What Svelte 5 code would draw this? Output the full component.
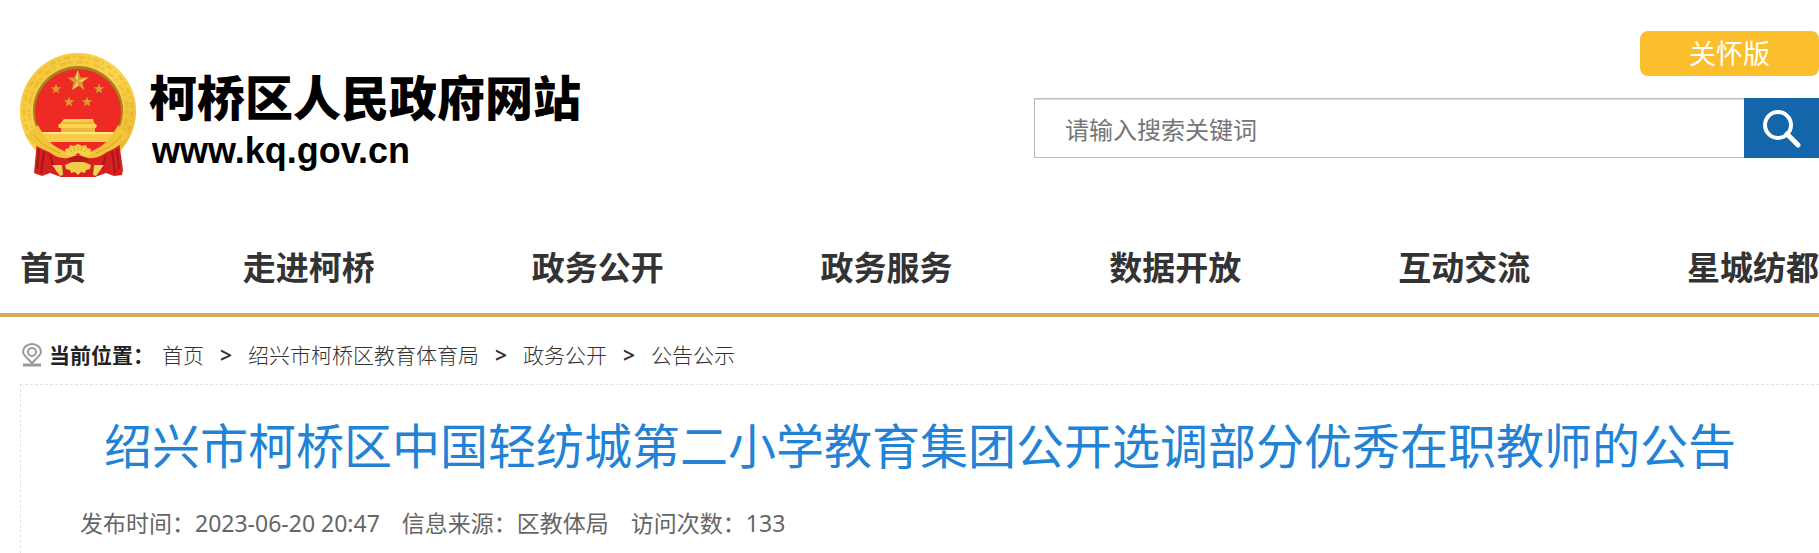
<script>
  const navItems = ['首页', '走进柯桥', '政务公开', '政务服务', '数据开放', '互动交流', '星城纺都'];
  const crumbs = ['首页', '绍兴市柯桥区教育体育局', '政务公开', '公告公示'];
  let keyword = '';
</script>

<div class="page">
  <header>
    <a class="logo" href="#home">
      <svg class="emblem" viewBox="0 0 116 125" aria-hidden="true">
        <defs>
          <linearGradient id="gold" x1="0" y1="0" x2="1" y2="1">
            <stop offset="0" stop-color="#f3c235" />
            <stop offset="0.5" stop-color="#fbd650" />
            <stop offset="1" stop-color="#e9ae26" />
          </linearGradient>
          <polygon id="star" points="0,-11 2.6,-3.6 10.5,-3.4 4.2,1.4 6.5,8.9 0,4.4 -6.5,8.9 -4.2,1.4 -10.5,-3.4 -2.6,-3.6" />
        </defs>
        <circle cx="58" cy="58" r="58" fill="url(#gold)" />
        <circle cx="58" cy="58" r="54" fill="none" stroke="#dc9f22" stroke-width="3" stroke-dasharray="6 3 2 4" opacity="0.3" />
        <circle cx="58" cy="58" r="49" fill="none" stroke="#dc9f22" stroke-width="3" stroke-dasharray="3 5 7 2" opacity="0.3" />
        <circle cx="58" cy="58" r="45" fill="#a9801d" />
        <circle cx="58" cy="59" r="43" fill="#ee2a24" />
        <g fill="#d6a02a">
          <use href="#star" transform="translate(58 28)" />
          <use href="#star" transform="translate(36 36) scale(.5)" />
          <use href="#star" transform="translate(79 36) scale(.5)" />
          <use href="#star" transform="translate(49 49) scale(.5)" />
          <use href="#star" transform="translate(67 49) scale(.5)" />
        </g>
        <path d="M58 17v11l-3-4z M58 28l10-4-6 5z M58 28l-6 9 6-4z" fill="#f4d470" />
        <path d="M44 66h29l1 4 3 2-1 3H39l-1-3 3-2z" fill="#fbd34c" />
        <path d="M43 70h30" stroke="#d79a2a" stroke-width="1" />
        <path d="M41 75h34v5H41z" fill="#f0b93c" />
        <path d="M22 80h72l-4 9H26z" fill="#f8cc4a" />
        <path d="M22 80h72" stroke="#ffe680" stroke-width="2" />
        <path d="M17 88l12 9 16 6h26l16-6 12-9 4 29-1 5-8 1-8-3-11 4H41l-11-4-8 3-8-3z" fill="#d7201f" />
        <path d="M19 96l-2 20M24 98l-3 22M30 102l4 14M97 96l2 20M92 98l3 22M86 102l-4 14" fill="none" stroke="#8f1518" stroke-width="2" opacity="0.7" />
        <path d="M7 82l11-10c6 12 13 20 22 24l8 4 10 3 10-3 8-4c9-4 16-12 22-24l11 10c-7 9-14 14-22 17-7 5-13 7-19 6l-10-3-10 3c-6 1-12-1-19-6-8-3-17-8-24-17z" fill="#f3c33a" />
        <path d="M14 82c8 10 16 14 26 18M102 82c-8 10-16 14-26 18" fill="none" stroke="#dba028" stroke-width="1" />
        <path d="M47 106l11-4 11 4-5 4H52z" fill="#b8191b" />
        <path d="M32 112h10l1 10-3 1z M84 112H74l-1 10 3 1z" fill="#f0cf5a" />
        <path d="M45 112l7-3h12l7 3-1 4-4 1-1 3-4-1-3 3-3-3-4 1-1-3-4-1z" fill="#f5cc48" />
        <path d="M46 102l-1-6 4-1 1-3 4 1 4-2 4 2 4-1 1 3 4 1-1 6-7 1-5-3-5 3z" fill="#f8d14c" />
        <path d="M52 99l-3-3M55 98l-1-4M58 98v-5M61 98l1-4M64 99l3-3" stroke="#dba028" stroke-width="1" />
      </svg>
      <span class="names">
        <strong>柯桥区人民政府网站</strong>
        <b>www.kq.gov.cn</b>
      </span>
    </a>

    <div class="tools">
      <button class="care" type="button">关怀版</button>
      <form class="search" on:submit|preventDefault>
        <input type="text" aria-label="搜索" placeholder="请输入搜索关键词" bind:value={keyword} />
        <button type="submit" aria-label="搜索">
          <svg viewBox="0 0 40 40" aria-hidden="true">
            <circle cx="16" cy="17" r="13" />
            <path d="M25 26l11 11" stroke-width="5" />
          </svg>
        </button>
      </form>
    </div>
  </header>

  <nav>
    {#each navItems as item}
      <a href="#nav">{item}</a>
    {/each}
  </nav>

  <div class="crumbs">
    <svg viewBox="0 0 20 24" aria-hidden="true">
      <path d="M10 20C5 15 1 12 1 9a9 8 0 0 1 18 0c0 3-4 6-9 11z" />
      <circle cx="10" cy="9" r="4" />
      <path d="M1 22h18" stroke-width="3" />
    </svg>
    <strong>当前位置：</strong>
    <div class="trail">
      {#each crumbs as crumb, i}
        {#if i > 0}<span>&gt;</span>{/if}
        <a href="#crumb">{crumb}</a>
      {/each}
    </div>
  </div>

  <main>
    <h1>绍兴市柯桥区中国轻纺城第二小学教育集团公开选调部分优秀在职教师的公告</h1>
    <div class="meta">
      <span>发布时间：2023-06-20 20:47</span>
      <span>信息来源：区教体局</span>
      <span>访问次数：133</span>
    </div>
  </main>
</div>

<style>
  :global(body) {
    margin: 0;
    background: #fff;
  }
  .page {
    display: flex;
    flex-direction: column;
    box-sizing: border-box;
    min-height: 100vh;
    color: #333;
    font-family: "Noto Sans", "Noto Sans CJK SC", sans-serif;
  }
  a {
    color: inherit;
    text-decoration: none;
  }
  button {
    border: none;
    padding: 0;
    color: #fff;
    font-family: inherit;
    cursor: pointer;
  }
  header {
    display: flex;
    justify-content: space-between;
    align-items: flex-start;
    padding: 31px 0 0 20px;
  }
  .logo {
    display: flex;
    gap: 13px;
    padding-top: 22px;
    color: #000;
  }
  .emblem {
    width: 116px;
    height: 125px;
  }
  .names {
    display: flex;
    flex-direction: column;
    padding-top: 15px;
    white-space: nowrap;
  }
  .names strong {
    font-size: 48px;
    font-weight: 900;
    line-height: 60px;
  }
  .names b {
    font-family: "Liberation Sans", sans-serif;
    font-size: 36px;
    line-height: 46px;
    padding-left: 3px;
  }
  .tools {
    display: flex;
    flex-direction: column;
    gap: 22px;
    width: 785px;
  }
  .care {
    align-self: flex-end;
    width: 179px;
    height: 45px;
    border-radius: 8px;
    background: #fbbe2c;
    font-size: 27px;
    line-height: 45px;
  }
  .search {
    display: flex;
    height: 60px;
  }
  .search input {
    flex: 1;
    min-width: 0;
    box-sizing: border-box;
    padding: 2px 30px 0;
    border: 1px solid #bbb;
    border-right: none;
    font-family: inherit;
    font-size: 24px;
    box-shadow: inset 0 1px 0 #ddd;
    outline: none;
  }
  .search input::placeholder {
    color: #757575;
  }
  .search button {
    display: grid;
    place-items: center;
    width: 75px;
    background: #1466ab;
  }
  .search svg {
    width: 40px;
    height: 40px;
    fill: none;
    stroke: #fff;
    stroke-width: 4;
    stroke-linecap: round;
  }
  nav {
    display: flex;
    justify-content: space-between;
    padding: 66px 0 21px 20px;
    border-bottom: 4px solid #d5ac5c;
    font-size: 33px;
    font-weight: bold;
    line-height: 48px;
    white-space: nowrap;
  }
  .crumbs {
    display: flex;
    align-items: center;
    padding: 22px 0 13px 22px;
    font-size: 21px;
    line-height: 32px;
    white-space: nowrap;
  }
  .crumbs svg {
    width: 20px;
    height: 24px;
    margin-right: 7px;
    fill: none;
    stroke: #999;
    stroke-width: 2;
  }
  .crumbs strong {
    margin-right: 8px;
    color: #222;
  }
  .trail {
    display: flex;
    gap: 16px;
  }
  .trail a {
    font-weight: 300;
  }
  .trail span {
    font-weight: 600;
  }
  main {
    flex: 1;
    margin-left: 20px;
    border: 1px dashed #e3e3e3;
    border-width: 1px 0 0 1px;
  }
  h1 {
    margin: 26px 0 0;
    color: #2283d6;
    font-size: 48px;
    font-weight: 400;
    line-height: 70px;
    text-align: center;
  }
  .meta {
    display: flex;
    gap: 22px;
    padding: 25px 0 12px 59px;
    color: #666;
    font-size: 23px;
    line-height: 34px;
  }
</style>
